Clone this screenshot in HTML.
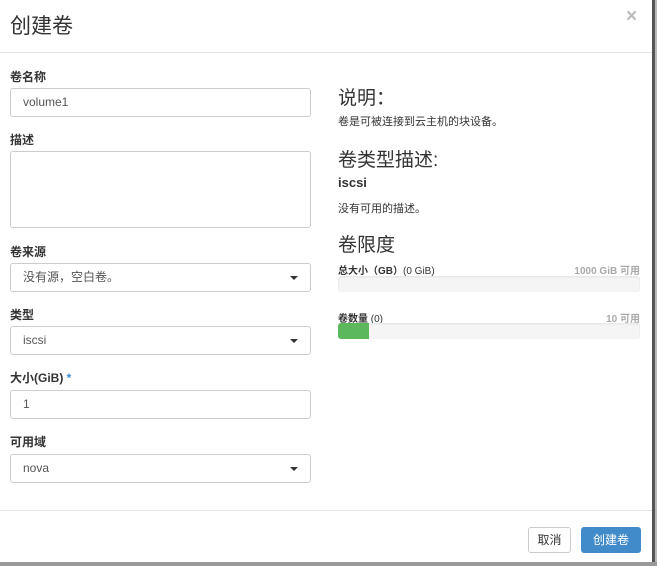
<!DOCTYPE html>
<html><head><meta charset="utf-8"><style>
*{margin:0;padding:0;box-sizing:border-box}
body{width:657px;height:566px;background:#fff;font-family:"Liberation Sans","Noto Sans CJK SC",sans-serif;color:#333;position:relative;overflow:hidden;font-size:12px}
.a{position:absolute;white-space:nowrap}
.lbl{font-weight:bold;font-size:12px;color:#333}
.inp{position:absolute;left:10px;width:301px;height:29px;border:1px solid #ccc;border-radius:3px;padding:0 12px;line-height:27px;color:#555;font-size:12px}
.caret{position:absolute;right:12px;top:12px;width:0;height:0;border-left:4px solid transparent;border-right:4px solid transparent;border-top:4px solid #333}
.bar{position:absolute;left:338px;width:302px;height:16px;background:#f5f5f5;border-radius:3px;box-shadow:inset 0 1px 2px rgba(0,0,0,.08)}
</style></head><body>
<div class="a" style="left:10px;top:10px;font-size:21px;color:#333">创建卷</div>
<div class="a" style="left:626px;top:6px;font-size:19px;font-weight:bold;color:#bbb">×</div>
<div class="a" style="left:0;top:52px;width:652px;height:1px;background:#e5e5e5"></div>

<div class="a lbl" style="left:10px;top:68px">卷名称</div>
<div class="inp" style="top:88px">volume1</div>
<div class="a lbl" style="left:10px;top:131px">描述</div>
<div class="inp" style="top:151px;height:77px"></div>
<div class="a lbl" style="left:10px;top:243px">卷来源</div>
<div class="inp" style="top:263px">没有源，空白卷。<span class="caret"></span></div>
<div class="a lbl" style="left:10px;top:306px">类型</div>
<div class="inp" style="top:326px">iscsi<span class="caret"></span></div>
<div class="a lbl" style="left:10px;top:369px">大小(GiB) <span style="color:#428bca">*</span></div>
<div class="inp" style="top:390px">1</div>
<div class="a lbl" style="left:10px;top:433px">可用域</div>
<div class="inp" style="top:454px">nova<span class="caret"></span></div>

<div class="a" style="left:338px;top:83px;font-size:19px">说明：</div>
<div class="a" style="left:338px;top:113px;font-size:11px">卷是可被连接到云主机的块设备。</div>
<div class="a" style="left:338px;top:145px;font-size:19px">卷类型描述:</div>
<div class="a" style="left:338px;top:175px;font-size:13px;font-weight:bold">iscsi</div>
<div class="a" style="left:338px;top:200px;font-size:11px">没有可用的描述。</div>
<div class="a" style="left:338px;top:230px;font-size:19px">卷限度</div>
<div class="a" style="left:338px;top:262px;font-size:10px"><b>总大小（GB）</b>(0 GiB)</div>
<div class="a" style="right:17px;top:262px;font-size:10px;color:#aaa;font-weight:bold">1000 GiB 可用</div>
<div class="bar" style="top:276px"></div>
<div class="a" style="left:338px;top:310px;font-size:10px"><b>卷数量</b> (0)</div>
<div class="a" style="right:17px;top:310px;font-size:10px;color:#aaa;font-weight:bold">10 可用</div>
<div class="bar" style="top:323px"><div style="width:31px;height:16px;background:#5cb85c;border-radius:3px 0 0 3px"></div></div>

<div class="a" style="left:0;top:510px;width:652px;height:1px;background:#e5e5e5"></div>
<div class="a" style="left:528px;top:527px;width:43px;height:26px;border:1px solid #ccc;border-radius:3px;text-align:center;line-height:24px;font-size:12px">取消</div>
<div class="a" style="left:581px;top:527px;width:60px;height:26px;background:#428bca;border-radius:3px;color:#fff;text-align:center;line-height:26px;font-size:12px">创建卷</div>

<div class="a" style="left:652px;top:0;width:3px;height:566px;background:#555"></div>
<div class="a" style="left:655px;top:0;width:2px;height:566px;background:#bbb"></div>
<div class="a" style="left:0;top:562px;width:657px;height:4px;background:#999"></div>
</body></html>
